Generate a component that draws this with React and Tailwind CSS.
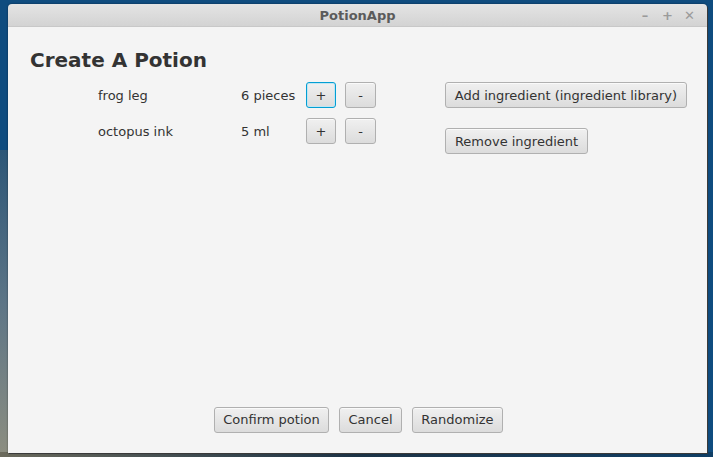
import React from "react";

function Btn({ children, className = "", focused = false, nudge = true }) {
  return (
    <div
      className={
        "flex items-center justify-center h-[26px] rounded-[3px] text-[13px] text-[#333333] bg-gradient-to-b from-[#f0f0f0] to-[#dcdcdc] " +
        (nudge ? "pt-[2px] " : "") +
        (focused
          ? "border border-[#039ed3] shadow-[inset_0_0_0_1px_#bfe6f3] "
          : "border border-[#b0b0b0] shadow-[inset_0_1px_0_#fafafa] ") +
        className
      }
    >
      {children}
    </div>
  );
}

export default function App() {
  return (
    <div
      className="relative w-[713px] h-[457px] overflow-hidden bg-[#0f4c7f]"
      style={{ fontFamily: '"DejaVu Sans", Verdana, sans-serif' }}
    >
      {/* wallpaper hints */}
      <div className="absolute left-0 top-[150px] w-[8px] h-[307px] bg-gradient-to-b from-[#2c5677] via-[#5d7586] to-[#8d8e80]" />
      <div className="absolute left-0 bottom-0 w-[713px] h-[5px] bg-gradient-to-r from-[#6b6a5c] via-[#1c3346] to-[#0f3f66]" />

      <div className="absolute left-[8px] top-[4px] w-[699px] h-[449px] flex flex-col rounded-t-[4px] shadow-[1px_1px_0_#3a3a3a,0_0_2px_rgba(0,0,0,0.5)]">
        {/* title bar */}
        <div className="relative h-[23px] flex items-center justify-center rounded-t-[4px] bg-gradient-to-b from-[#e4e4e4] to-[#d3d3d3] border-b border-[#c8c8c8]">
          <span className="text-[13px] font-bold text-[#5b5b5b] leading-none">PotionApp</span>
          <div className="absolute right-[13px] top-0 h-[23px] flex items-center gap-[12px] text-[#9a9a9a] text-[13px] font-bold">
            <span className="w-[10px] text-center">–</span>
            <span className="w-[10px] text-center">+</span>
            <span className="w-[10px] text-center">✕</span>
          </div>
        </div>

        {/* content */}
        <div className="flex-1 flex flex-col bg-[#f4f4f4] pt-[21px]">
          <div className="pl-[22px] h-[24px] leading-[24px] text-[20px] font-bold text-[#333333]">
            Create A Potion
          </div>

          <div className="flex pl-[90px] mt-[10px]">
            <div className="flex flex-col gap-[10px] w-[278px]">
              <div className="flex items-center h-[26px] text-[13px] text-[#333333]">
                <span className="w-[143px] pt-[2px]">frog leg</span>
                <span className="w-[65px] pt-[2px]">6 pieces</span>
                <Btn className="w-[30px]" focused>+</Btn>
                <Btn className="w-[31px] ml-[9px]">-</Btn>
              </div>
              <div className="flex items-center h-[26px] text-[13px] text-[#333333]">
                <span className="w-[143px] pt-[2px]">octopus ink</span>
                <span className="w-[65px] pt-[2px]">5 ml</span>
                <Btn className="w-[30px]">+</Btn>
                <Btn className="w-[31px] ml-[9px]">-</Btn>
              </div>
            </div>
            <div className="flex flex-col items-start gap-[20px] ml-[69px]">
              <Btn className="w-[242px]">Add ingredient (ingredient library)</Btn>
              <Btn className="w-[143px]">Remove ingredient</Btn>
            </div>
          </div>

          <div className="flex-1" />

          <div className="flex justify-center gap-[10px] pb-[20px] pl-[2px]">
            <Btn className="w-[115px]" nudge={false}>Confirm potion</Btn>
            <Btn className="w-[63px]" nudge={false}>Cancel</Btn>
            <Btn className="w-[91px]" nudge={false}>Randomize</Btn>
          </div>
        </div>
      </div>
    </div>
  );
}
